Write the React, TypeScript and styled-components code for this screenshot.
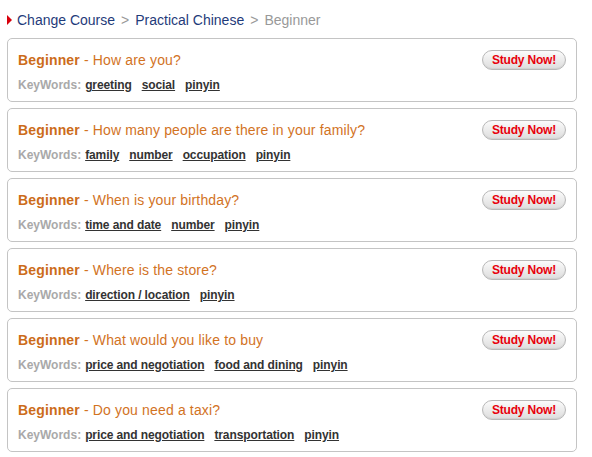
import styled, { createGlobalStyle } from 'styled-components';

const GlobalStyle = createGlobalStyle`
  body {
    margin: 0;
    background: #ffffff;
    font-family: "Liberation Sans", Arial, sans-serif;
  }
`;

const lessons = [
  { title: 'How are you?', keywords: ['greeting', 'social', 'pinyin'] },
  {
    title: 'How many people are there in your family?',
    keywords: ['family', 'number', 'occupation', 'pinyin'],
  },
  { title: 'When is your birthday?', keywords: ['time and date', 'number', 'pinyin'] },
  { title: 'Where is the store?', keywords: ['direction / location', 'pinyin'] },
  {
    title: 'What would you like to buy',
    keywords: ['price and negotiation', 'food and dining', 'pinyin'],
  },
  {
    title: 'Do you need a taxi?',
    keywords: ['price and negotiation', 'transportation', 'pinyin'],
  },
];

function App() {
  return (
    <Page>
      <GlobalStyle />
      <Breadcrumb>
        <Arrow />
        <CrumbLink>Change Course</CrumbLink>
        <Sep>&gt;</Sep>
        <CrumbLink>Practical Chinese</CrumbLink>
        <Sep>&gt;</Sep>
        <Current>Beginner</Current>
      </Breadcrumb>
      <List>
        {lessons.map((lesson) => (
          <Card key={lesson.title}>
            <CardBody>
              <Title>
                <Level>Beginner</Level> - {lesson.title}
              </Title>
              <Keywords>
                <KeyLabel>KeyWords:</KeyLabel>
                {lesson.keywords.map((k) => (
                  <Keyword key={k}>{k}</Keyword>
                ))}
              </Keywords>
            </CardBody>
            <StudyButton>Study Now!</StudyButton>
          </Card>
        ))}
      </List>
    </Page>
  );
}

export default App;

const Page = styled.div`
  width: 592px;
  padding: 9px 15px 0 7px;
  box-sizing: border-box;
`;

const Breadcrumb = styled.div`
  display: flex;
  align-items: center;
  height: 21px;
  font-size: 14px;
  margin-bottom: 8px;
`;

const Arrow = styled.span`
  width: 0;
  height: 0;
  border-top: 5px solid transparent;
  border-bottom: 5px solid transparent;
  border-left: 5px solid #d8000c;
  margin-right: 5px;
`;

const CrumbLink = styled.span`
  color: #1f3b7a;
`;

const Sep = styled.span`
  color: #999999;
  margin: 0 6px;
`;

const Current = styled.span`
  color: #999999;
`;

const List = styled.div`
  display: flex;
  flex-direction: column;
  gap: 6px;
`;

const Card = styled.div`
  display: flex;
  justify-content: space-between;
  align-items: flex-start;
  height: 64px;
  box-sizing: border-box;
  border: 1px solid #c4c4c4;
  border-radius: 5px;
  padding: 11px 10px 0 10px;
`;

const CardBody = styled.div`
  display: flex;
  flex-direction: column;
  gap: 9px;
  padding-top: 1px;
`;

const Title = styled.div`
  font-size: 14px;
  line-height: 18px;
  letter-spacing: 0.15px;
  color: #d2731f;
`;

const Level = styled.span`
  font-weight: bold;
  color: #cc6c1a;
`;

const Keywords = styled.div`
  display: flex;
  gap: 10px;
  font-size: 12px;
  font-weight: bold;
  line-height: 15px;
`;

const KeyLabel = styled.span`
  color: #a9a9a9;
  margin-right: -6px;
`;

const Keyword = styled.span`
  color: #333333;
  text-decoration: underline;
  letter-spacing: -0.1px;
`;

const StudyButton = styled.button`
  height: 20px;
  width: 84px;
  padding: 0;
  border: 1px solid #b8b8b8;
  border-radius: 10px;
  background: linear-gradient(#fbfbfb, #dddddd);
  box-shadow: inset 0 -1px 1px rgba(0, 0, 0, 0.06);
  color: #e8000b;
  font-family: "Liberation Sans", Arial, sans-serif;
  font-size: 12px;
  font-weight: bold;
  letter-spacing: -0.2px;
  cursor: pointer;
`;
